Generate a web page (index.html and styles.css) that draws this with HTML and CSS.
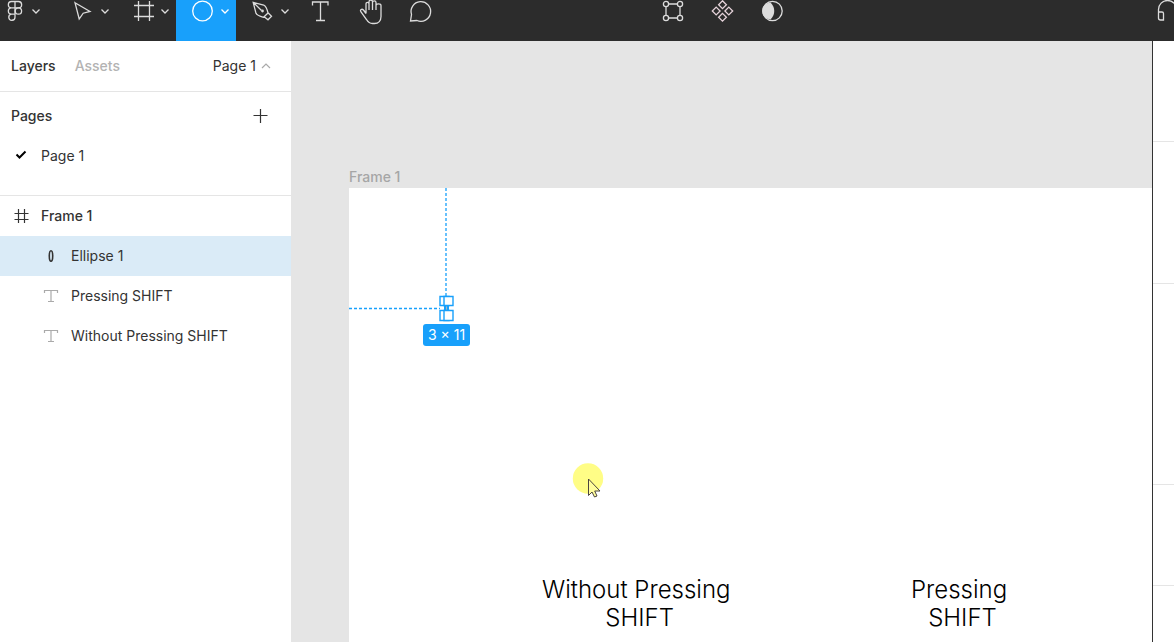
FILE: index.html
```html
<!DOCTYPE html>
<html lang="en">
<head>
<meta charset="utf-8">
<title>Design editor</title>
<link rel="stylesheet" href="styles.css">
</head>
<body class="app">
<header class="toolbar">
  <div class="group">
    <button class="tool tool-menu" aria-label="Main menu"><svg class="icon" width="56" height="41" viewBox="0 0 56 41"><path d="M15 1.500h-3.500a3 3 0 0 0 0 6.300h3.500zM15 1.500h3.500a3 3 0 0 1 0 6.300H15zM15 7.800h-3.500a3 3 0 0 0 0 6.300H15zM15 14.100h-3.500a3.100 3.100 0 1 0 3.500 3.100z"/><circle cx="18.400" cy="11" r="3.200"/><path d="M32.500 9.500l3.500 3.500 3.500-3.500"/></svg></button>
    <button class="tool" aria-label="Move"><svg class="icon" width="60" height="41" viewBox="56 0 60 41"><path d="M75 2.700l15 8.700-6.800 1.800-4 5.800z"/><path d="M101.500 9.500l3.500 3.500 3.500-3.500"/></svg></button>
    <button class="tool" aria-label="Frame"><svg class="icon" width="60" height="41" viewBox="116 0 60 41"><path d="M138.500 1v20M149.500 1v20M134 5.500h20M134 16.500h20M161.500 9.500l3.500 3.500 3.500-3.500"/></svg></button>
    <button class="tool tool-active" aria-label="Ellipse"><svg class="icon" width="60" height="41" viewBox="176 0 60 41"><circle cx="202.500" cy="11" r="9.800"/><path d="M221.500 9.500l3.500 3.500 3.500-3.500"/></svg></button>
    <button class="tool" aria-label="Pen"><svg class="icon" width="60" height="41" viewBox="236 0 60 41"><path d="M253.200 2.500l10.500 2.500c2.200 1 3.500 4.500 4.300 8l-4.500 4.300c-3-.8-6.500-1.800-7.500-4zM253.500 2.700l8 7.800M268 12.800l3.500 3.500-3.500 3.500-3.800-3"/><circle cx="262.500" cy="11" r="1.400" class="solid"/><path d="M281.500 9.500l3.500 3.500 3.500-3.500"/></svg></button>
    <button class="tool" aria-label="Text"><svg class="icon" width="49" height="41" viewBox="296 0 49 41"><path d="M312.500 5.500v-3.500h15.500v3.500M320.500 2v18.500M316 20.500h9"/></svg></button>
    <button class="tool" aria-label="Hand"><svg class="icon" width="50" height="41" viewBox="345 0 50 41"><path d="M366 13.500V4c0-2.300 3-2.300 3 0v6M369 10V1.700c0-2.200 3.500-2.200 3.500 0V10M372.500 2.500c0-2.200 3.500-2.200 3.500 0V10M376 5.500c0-2.300 5-2.300 5 0v11c0 4-2.500 7-6.500 7h-2c-3 0-4.500-1.500-6-4l-5.500-7.500c-1.500-2.500 1-3.500 2.500-2l2.500 3.500"/></svg></button>
    <button class="tool" aria-label="Comment"><svg class="icon" width="50" height="41" viewBox="395 0 50 41"><path d="M410.500 21l1-6.500A9.800 9.800 0 1 1 417 20.500z"/></svg></button>
  </div>
  <div class="group group-middle">
    <button class="tool" aria-label="Edit object"><svg class="icon" width="50" height="41" viewBox="648 0 50 41"><path d="M668 4h10M668 18h10M666 6.500v9M680 6.500v9"/><circle cx="666" cy="4" r="2.600"/><circle cx="680" cy="4" r="2.600"/><circle cx="666" cy="18" r="2.600"/><circle cx="680" cy="18" r="2.600"/></svg></button>
    <button class="tool" aria-label="Create component"><svg class="icon icon-tinted" width="50" height="41" viewBox="698 0 50 41"><path d="M722.500.800l3.900 3.900-3.900 3.900-3.900-3.900zM722.500 13.400l3.900 3.900-3.900 3.900-3.900-3.900zM716.200 7.100l3.900 3.900-3.900 3.900-3.900-3.900zM728.800 7.100l3.900 3.900-3.900 3.900-3.900-3.900z"/></svg></button>
    <button class="tool" aria-label="Use as mask"><svg class="icon" width="50" height="41" viewBox="748 0 50 41"><circle cx="772.500" cy="11" r="9.700"/><path class="solid" d="M770.500 2.500c5 5 5 12 0 17C759.500 18 759.500 4 770.500 2.500z"/></svg></button>
  </div>
  <div class="group group-end">
    <button class="tool" aria-label="Audio"><svg class="icon" width="20" height="41" viewBox="1154 0 20 41"><path d="M1158.500 12V9.500a9 9 0 0 1 18 0M1158.500 12h3.500q1.500 0 1.500 1.500V20h-3q-2 0-2-2z"/></svg></button>
  </div>
</header>
<div class="workspace">
  <aside class="sidebar">
    <nav class="tabs">
      <button class="tab">Layers</button>
      <button class="tab tab-muted">Assets</button>
      <button class="tab page-picker">Page 1 <svg class="line-icon faint" width="10" height="10" viewBox="0 0 10 10"><path d="M1 7l4-4 4 4"/></svg></button>
    </nav>
    <section class="pages">
      <div class="row row-head"><h2 class="heading">Pages</h2><button class="add" aria-label="Add page"><svg class="line-icon" width="16" height="16" viewBox="0 0 16 16"><path d="M7.500 1v14M.500 7.500h14"/></svg></button></div>
      <button class="row"><svg class="row-icon check" width="20" height="20" viewBox="0 0 20 20"><path d="M5.500 8.500l3 3 6-6"/></svg>Page 1</button>
    </section>
    <section class="layers">
      <button class="row row-strong"><svg class="row-icon line-icon" width="20" height="20" viewBox="0 0 20 20"><path d="M7.500 3v14M13.500 3v14M3.500 7.500h14M3.500 13.500h14"/></svg>Frame 1</button>
      <button class="row row-child row-selected"><svg class="row-icon line-icon" width="20" height="20" viewBox="0 0 20 20"><ellipse cx="10" cy="10" rx="1.700" ry="5.200" stroke-width="1.600"/></svg>Ellipse 1</button>
      <button class="row row-child"><svg class="row-icon line-icon faint" width="20" height="20" viewBox="0 0 20 20"><path d="M3.500 7V4.500h13V7M10 4.500v11M7 15.500h6"/></svg>Pressing SHIFT</button>
      <button class="row row-child"><svg class="row-icon line-icon faint" width="20" height="20" viewBox="0 0 20 20"><path d="M3.500 7V4.500h13V7M10 4.500v11M7 15.500h6"/></svg>Without Pressing SHIFT</button>
    </section>
  </aside>
  <main class="canvas">
    <div class="frame-label">Frame 1</div>
    <div class="frame">
      <svg class="selection" width="120" height="140" viewBox="0 0 120 140">
        <path class="guide" d="M97 0v108M0 120.500h91"/>
        <path class="bounds" d="M96 117h3v7h-3z"/>
        <path class="handle" d="M91 108.500h9v9h-9zM91 122.500h9v10h-9z"/>
        <path class="handle" d="M95 108.500h9v9h-9zM95 122.500h9v10h-9z"/>
      </svg>
      <div class="size-badge">3 × 11</div>
      <p class="caption caption-left">Without Pressing
 SHIFT</p>
      <p class="caption caption-right">Pressing
 SHIFT</p>
      <svg class="pointer" width="32" height="36" viewBox="0 0 32 36"><circle cx="16" cy="15.500" r="15.200" fill="#fffd86"/><path d="M16.500 16v16.500l3.500-3.500 2.500 5 2.500-1-2.300-5h5.300z" fill="#fffd9c" stroke="#4b4540"/></svg>
    </div>
  </main>
  <aside class="inspector">
    <div class="panel panel-1"></div>
    <div class="panel panel-2"></div>
    <div class="panel panel-3"></div>
    <div class="panel panel-4"></div>
  </aside>
</div>
</body>
</html>
```

FILE: styles.css
```css
* { box-sizing: border-box; }

.app {
  margin: 0;
  height: 100vh;
  display: flex;
  flex-direction: column;
  overflow: hidden;
  font: 14px/20px Inter, "Liberation Sans", sans-serif;
  color: #333;
  background: #fff;
}

button {
  border: 0;
  padding: 0;
  margin: 0;
  background: none;
  font: inherit;
  color: inherit;
  text-align: left;
}

svg { display: block; flex: none; }

.toolbar {
  display: grid;
  grid-template-columns: auto 4fr auto 7fr auto;
  flex: none;
  background: #2c2c2c;
}
.group { display: flex; }
.group-middle { grid-column: 3; }
.group-end { grid-column: 5; }
.tool-active { background: #18a0fb; }
.icon { fill: none; stroke: #dcdcdc; stroke-width: 1.3; }
.icon-tinted { stroke: #e6d3da; }
.tool-active .icon { stroke: #fff; }
.icon .solid { fill: #dcdcdc; stroke: none; }

.workspace { flex: 1; display: flex; min-height: 0; }

.sidebar { flex: none; width: 292px; border-right: 1px solid #e5e5e5; }
.tabs {
  display: flex;
  align-items: center;
  gap: 19px;
  height: 51px;
  padding: 0 20px 0 11px;
  border-bottom: 1px solid #e5e5e5;
}
.tab { font-weight: 500; }
.tab-muted { color: #b3b3b3; }
.page-picker {
  display: flex;
  align-items: center;
  gap: 5px;
  margin-left: auto;
  font-weight: 400;
}
.line-icon { fill: none; stroke: #333; stroke-width: 1.2; }
.faint { stroke: #aaa; }

.pages { padding: 4px 0 19px; border-bottom: 1px solid #e5e5e5; }
.row {
  display: flex;
  align-items: center;
  gap: 10px;
  width: 100%;
  height: 40px;
  padding: 0 11px;
}
.row-head { justify-content: space-between; padding-right: 22px; }
.heading { margin: 0; font-size: 14px; font-weight: 500; }
.row-strong { font-weight: 500; }
.row-child { padding-left: 41px; }
.row-selected { background: #daebf7; }
.check { fill: none; stroke: #000; stroke-width: 2; }

.canvas {
  flex: 1;
  display: flex;
  flex-direction: column;
  padding: 126px 0 0 57px;
  background: #e5e5e5;
  overflow: hidden;
}
.frame-label { color: #a6a6a6; height: 21px; font-weight: 500; }
.frame { position: relative; flex: 1; background: #fff; }

.selection { position: absolute; left: 0; top: 0; }
.guide { stroke: #18a0fb; stroke-dasharray: 3 2; stroke-width: 1.3; }
.bounds { fill: #a9b6be; stroke: #18a0fb; stroke-width: 2; }
.handle { fill: #fff; stroke: #18a0fb; stroke-width: 1.4; }
.size-badge {
  position: absolute;
  left: 74px;
  top: 136px;
  padding: 1px 5px;
  border-radius: 3px;
  background: #18a0fb;
  color: #fff;
}
.caption {
  position: absolute;
  margin: 0;
  font-size: 24px;
  font-weight: 300;
  line-height: 28px;
  text-align: center;
  white-space: pre;
  color: #000;
}
.caption-left { left: 193px; top: 388px; }
.caption-right { left: 562px; top: 388px; }
.pointer { position: absolute; left: 223px; top: 275px; }

.inspector {
  flex: none;
  width: 22px;
  border-left: 1px solid #333;
}
.panel { border-bottom: 1px solid #e5e5e5; }
.panel-1 { height: 101px; }
.panel-2 { height: 142px; }
.panel-3 { height: 201px; }
.panel-4 { height: 101px; }
```
